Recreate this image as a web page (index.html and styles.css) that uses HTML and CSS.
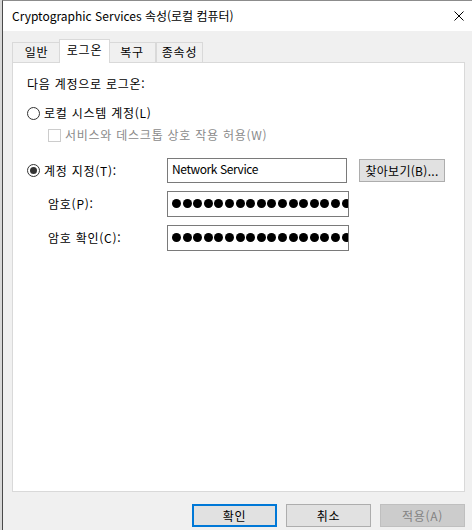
FILE: index.html
```html
<!DOCTYPE html>
<html lang="ko">
<head>
  <meta charset="UTF-8">
  <meta name="viewport" content="width=device-width, initial-scale=1.0">
  <title>Cryptographic Services 속성(로컬 컴퓨터)</title>
  <link rel="stylesheet" href="styles.css">
</head>
<body>
  <div class="desk">
    <div class="edge"></div>
    <div class="window">
      <div class="titlebar">
        <span class="title">Cryptographic Services 속성(로컬 컴퓨터)</span>
        <svg class="close" width="10" height="10" viewBox="0 0 10 10">
          <path d="M0.5 0.5 L9.5 9.5 M9.5 0.5 L0.5 9.5" stroke="#000" stroke-width="1" fill="none"/>
        </svg>
      </div>

      <div class="content">
        <div class="tabs">
          <div class="tab tab-general">일반</div>
          <div class="tab tab-active">로그온</div>
          <div class="tab tab-recovery">복구</div>
          <div class="tab tab-deps">종속성</div>
        </div>

        <div class="panel">
          <div class="heading">다음 계정으로 로그온:</div>

          <div class="option">
            <span class="radio"></span>
            <span>로컬 시스템 계정(L)</span>
          </div>
          <div class="option option-sub disabled">
            <span class="checkbox"></span>
            <span>서비스와 데스크톱 상호 작용 허용(W)</span>
          </div>

          <div class="account">
            <div class="option">
              <span class="radio checked"></span>
              <span>계정 지정(T):</span>
            </div>
            <div class="field field-name">Network Service</div>
            <button class="btn btn-browse">찾아보기(B)...</button>

            <div class="label">암호(P):</div>
            <div class="field field-pass" id="pass1"></div>
            <div></div>

            <div class="label">암호 확인(C):</div>
            <div class="field field-pass" id="pass2"></div>
            <div></div>
          </div>
        </div>

        <div class="buttons">
          <button class="btn btn-default">확인</button>
          <button class="btn">취소</button>
          <button class="btn btn-disabled">적용(A)</button>
        </div>
      </div>
    </div>
  </div>

  <script>
    // password masks
    ['pass1', 'pass2'].forEach(function (id) {
      const field = document.getElementById(id);
      for (let i = 0; i < 20; i++) {
        const dot = document.createElement('span');
        dot.className = 'dot';
        field.appendChild(dot);
      }
    });
  </script>
</body>
</html>
```

FILE: styles.css
```css
html, body {
  margin: 0;
  padding: 0;
}
body {
  width: 472px;
  height: 530px;
  overflow: hidden;
  background-color: #f0f0f0;
  font-family: "Noto Sans CJK KR", "Noto Sans", sans-serif;
  font-size: 12px;
  line-height: 16px;
  color: #000;
}
.desk {
  display: flex;
  height: 530px;
}
.edge {
  width: 2px;
  flex: none;
  background-color: #d8d8d8;
}
.window {
  flex: 1;
  display: flex;
  flex-direction: column;
  border-left: 1px solid #4a4a4a;
  border-top: 1px solid #8c8c8c;
  background-color: #f0f0f0;
}
.titlebar {
  height: 30px;
  flex: none;
  background-color: #fff;
  display: flex;
  align-items: center;
  justify-content: space-between;
  padding: 0 8px 0 9px;
}
.title {
  font-size: 12px;
  padding-bottom: 1px;
}
.close {
  display: block;
  margin-top: -1px;
}
.content {
  padding: 9px 0 0 9px;
  width: 453px;
  letter-spacing: 0.75px;
}
.tabs {
  display: flex;
  align-items: flex-end;
  height: 22px;
}
.tab {
  box-sizing: border-box;
  height: 20px;
  border: 1px solid #d9d9d9;
  border-bottom: none;
  background-color: #f0f0f0;
  text-align: center;
  line-height: 18px;
}
.tab-general {
  width: 49px;
}
.tab-active {
  width: 51px;
  height: 24px;
  margin: 0 -2px -1px -2px;
  background-color: #fff;
  position: relative;
  z-index: 1;
  line-height: 20px;
}
.tab-recovery {
  width: 48px;
}
.tab-deps {
  width: 47px;
}
.panel {
  box-sizing: border-box;
  height: 430px;
  background-color: #fff;
  border: 1px solid #d9d9d9;
  padding: 0 14px;
  display: flex;
  flex-direction: column;
}
.heading {
  margin-top: 13px;
}
.option {
  display: flex;
  align-items: center;
  gap: 4px;
  height: 16px;
  margin-top: 13px;
}
.option-sub {
  margin-top: 6px;
  padding-left: 21px;
}
.disabled {
  color: #8a8a8a;
}
.radio {
  box-sizing: border-box;
  flex: none;
  width: 13px;
  height: 13px;
  border: 1px solid #333;
  border-radius: 50%;
  display: flex;
  align-items: center;
  justify-content: center;
  background-color: #fff;
}
.radio.checked::after {
  content: "";
  width: 7px;
  height: 7px;
  border-radius: 50%;
  background-color: #333;
}
.checkbox {
  box-sizing: border-box;
  flex: none;
  width: 13px;
  height: 13px;
  border: 1px solid #cccccc;
  background-color: #fff;
}
.account {
  display: grid;
  grid-template-columns: 130px 182px 86px;
  grid-template-rows: 25px 26px 26px;
  column-gap: 10px;
  row-gap: 8px;
  margin-top: 15px;
  align-items: center;
}
.account .option {
  margin-top: 0;
}
.label {
  padding-left: 21px;
}
.field {
  box-sizing: border-box;
  height: 100%;
  border: 1px solid #7a7a7a;
  background-color: #fff;
  padding: 2px 4px 0 4px;
  overflow: hidden;
  white-space: nowrap;
}
.field-name {
  width: 180px;
  letter-spacing: -0.4px;
}
.field-pass {
  display: flex;
  align-items: center;
  padding: 0 0 2px 4px;
}
.dot {
  flex: none;
  width: 9px;
  height: 9px;
  margin-right: 1.6px;
  border-radius: 50%;
  background-color: #000;
}
.btn {
  box-sizing: border-box;
  font-family: inherit;
  font-size: 12px;
  line-height: 16px;
  letter-spacing: 0.75px;
  color: #000;
  background-color: #e1e1e1;
  border: 1px solid #adadad;
  height: 23px;
  padding: 0;
  margin: 0;
}
.btn-browse {
  width: 86px;
  letter-spacing: 0.3px;
}
.buttons {
  display: flex;
  justify-content: flex-end;
  gap: 9px;
  margin-top: 12px;
}
.buttons .btn {
  width: 85px;
}
.btn-default {
  border: 2px solid #0078d7;
}
.btn-disabled {
  background-color: #cccccc;
  border-color: #bfbfbf;
  color: #838383;
}
```
